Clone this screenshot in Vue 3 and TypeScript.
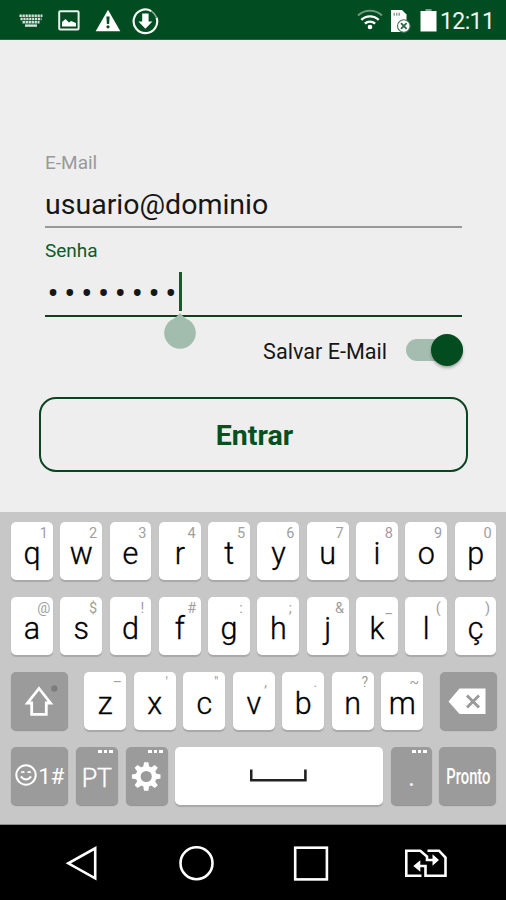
<script setup lang="ts">
import { ref } from 'vue'

interface Key {
  label: string
  hint: string
}

const toKeys = (letters: string, hints: string[]): Key[] =>
  letters.split('').map((label, i) => ({ label, hint: hints[i] }))

const topRow = toKeys('qwertyuiop', ['1', '2', '3', '4', '5', '6', '7', '8', '9', '0'])
const homeRow = toKeys('asdfghjklç', ['@', '$', '!', '#', ':', ';', '&', '_', '(', ')'])
const bottomRow = toKeys('zxcvbnm', ['–', "'", '"', ',', '.', '?', '~'])

const email = ref('usuario@dominio')
const password = ref('••••••••')
const saveEmail = ref(true)
</script>

<template>
  <div class="screen">
    <header class="status">
      <div class="status-left">
        <svg class="ic-keyboard" width="24" height="14" viewBox="0 0 24 14">
          <g fill="none" stroke="#d5e2da" stroke-width="2.4">
            <path d="M0.5 1.8H23.5" stroke-dasharray="2.3 .7" />
            <path d="M1.5 5H22.5" stroke-dasharray="2.2 .7" />
            <path d="M3.5 8.2H20.5" stroke-dasharray="2.4 .6" />
            <path d="M6 11.6H18" />
          </g>
        </svg>
        <svg class="ic-image" width="22" height="21" viewBox="0 0 22 21">
          <rect x="1.2" y="1.2" width="19.4" height="18.4" rx="1" fill="none" stroke="#e9f1ec" stroke-width="2" />
          <path d="M4 16.5v-4.5l3.5-3 3.5 3.5 2-1.5 5 2v3.5z" fill="#fff" />
        </svg>
        <svg class="ic-warn" width="26" height="23" viewBox="0 0 26 23">
          <path d="M13 .8L25.3 22.3H.7z" fill="#fff" />
          <path d="M11.4 7.5h3.2l-.5 7.6h-2.2z" fill="#024c22" />
          <circle cx="13" cy="17.8" r="1.6" fill="#024c22" />
        </svg>
        <svg class="ic-download" width="27" height="27" viewBox="0 0 27 27">
          <path d="M19.3 3.1A11.8 11.8 0 1 0 24.6 9.6" fill="none" stroke="#f4f8f5" stroke-width="2.2" />
          <path d="M19.3 3.1A11.8 11.8 0 0 1 24.6 9.6" fill="none" stroke="#8fb09d" stroke-width="1.6" />
          <path d="M10.2 5.5h6.4v8h3.8l-7 7.2-7-7.2h3.8z" fill="#fff" />
        </svg>
      </div>
      <div class="status-right">
        <svg class="ic-wifi" width="26" height="21" viewBox="0 0 26 21">
          <g fill="none" stroke-width="2.3">
            <path d="M1 6.6A17.5 17.5 0 0 1 25 6.6" stroke="#6f987f" stroke-width="2" />
            <path d="M4.3 10.8A12.6 12.6 0 0 1 21.7 10.8" stroke="#fff" />
            <path d="M7.9 14.7A7.4 7.4 0 0 1 18.1 14.7" stroke="#fff" />
          </g>
          <circle cx="13" cy="18" r="2.3" fill="#fff" />
        </svg>
        <svg class="ic-sim" width="20" height="23" viewBox="0 0 20 23">
          <path d="M0 0H11L15.5 4.5V22H0z" fill="#fff" />
          <path d="M2.5 2.7h1.5v3H2.5zM5 2.7h1.5v3H5zM7.5 2.7H9v3H7.5z" fill="#8ea898" />
          <circle cx="12.8" cy="16" r="6.3" fill="#fff" stroke="#3d7153" stroke-width="1.1" />
          <path d="M10 13.2l5.6 5.6M15.6 13.2l-5.6 5.6" stroke="#2d6545" stroke-width="1.8" />
        </svg>
        <svg class="ic-battery" width="17" height="23" viewBox="0 0 17 23">
          <path d="M5.5 0h6v3h-6z" fill="#7ea08c" />
          <path d="M.5 2h16v20.5H.5z" fill="#fff" />
        </svg>
        <span class="clock">12:11</span>
      </div>
    </header>

    <main class="form">
      <label class="caption">E-Mail</label>
      <div class="input">{{ email }}</div>
      <label class="caption active">Senha</label>
      <div class="input active">
        <span class="dots">{{ password }}</span>
        <span class="caret">
          <svg class="handle" width="34" height="38" viewBox="0 0 34 38">
            <path d="M17 0Q20 4 27 7.8A15.8 15.8 0 1 1 7 7.8Q14 4 17 0Z" fill="#a2bcae" />
          </svg>
        </span>
      </div>
      <div class="save" @click="saveEmail = !saveEmail">
        <span class="save-text">Salvar E-Mail</span>
        <span class="switch" :class="{ on: saveEmail }"><i class="thumb"></i></span>
      </div>
      <button class="enter" type="button"><span>Entrar</span></button>
    </main>

    <section class="keyboard">
      <div class="row">
        <div v-for="k in topRow" :key="k.label" class="key">
          <span class="hint">{{ k.hint }}</span><span class="letter">{{ k.label }}</span>
        </div>
      </div>
      <div class="row">
        <div v-for="k in homeRow" :key="k.label" class="key">
          <span class="hint">{{ k.hint }}</span><span class="letter">{{ k.label }}</span>
        </div>
      </div>
      <div class="row third">
        <div class="key dark wide">
          <svg width="57" height="58" viewBox="0 0 57 58">
            <path d="M28 16.5L39.5 31H35.3V42.3H20.7V31H16.5Z" fill="none" stroke="#fff" stroke-width="2.8" />
            <circle cx="43.3" cy="16.5" r="3.2" fill="#7d7d7d" />
          </svg>
        </div>
        <div class="letters">
          <div v-for="k in bottomRow" :key="k.label" class="key">
            <span class="hint small">{{ k.hint }}</span><span class="letter">{{ k.label }}</span>
          </div>
        </div>
        <div class="key dark wide">
          <svg width="57" height="58" viewBox="0 0 57 58">
            <path d="M8.5 29.5L19.5 16.5H45.5V42H19.5Z" fill="#fff" />
            <path d="M27 23.5L39 35.5M39 23.5L27 35.5" stroke="#9b9b9b" stroke-width="3" />
          </svg>
        </div>
      </div>
      <div class="row fourth">
        <div class="key dark wide sym">
          <svg width="22" height="22" viewBox="0 0 22 22">
            <g fill="none" stroke="#fff" stroke-width="2">
              <circle cx="11" cy="11" r="9.7" />
              <path d="M5.8 12.5Q11 18.5 16.2 12.5" />
              <path d="M6.3 8.8Q7.8 6.8 9.3 8.8M12.7 8.8Q14.2 6.8 15.7 8.8" stroke-width="1.6" />
            </g>
          </svg>
          <span>1#</span>
        </div>
        <div class="key dark lang">
          <span class="more"><i></i><i></i><i></i></span><span class="pt">PT</span>
        </div>
        <div class="key dark">
          <span class="more"><i></i><i></i><i></i></span>
          <svg class="gear" width="42" height="58" viewBox="0 0 42 58">
            <g transform="translate(20.2 29.5)">
              <circle r="8" fill="none" stroke="#fff" stroke-width="4.8" />
              <path
                v-for="a in 8"
                :key="a"
                :transform="`rotate(${a * 45})`"
                d="M-3.1 -9L-2.1 -14.3H2.1L3.1 -9Z"
                fill="#fff"
              />
            </g>
          </svg>
        </div>
        <div class="key space">
          <svg width="58" height="14" viewBox="0 0 58 14">
            <path d="M1.2 .5V11.2H55.4V.5" fill="none" stroke="#222" stroke-width="2.6" />
          </svg>
        </div>
        <div class="key dark">
          <span class="more"><i></i><i></i><i></i></span><span class="period">.</span>
        </div>
        <div class="key dark wide done"><span>Pronto</span></div>
      </div>
    </section>

    <nav class="nav">
      <svg width="506" height="75" viewBox="0 0 506 75">
        <g fill="none" stroke="#fff" stroke-width="2.6">
          <path d="M95.2 23.3V53.3L68.3 38.3Z" />
          <circle cx="196.5" cy="38.2" r="16" />
          <rect x="295.2" y="22.7" width="31.7" height="31.7" />
          <path d="M421.5 50.8H406.3V25.7H420.3L427 31.5V35H434" />
          <path d="M427.5 25.7H439L445.5 32.5V50.8H425.5V41H418" />
        </g>
        <path d="M432.5 29.2L439 35L432.5 40.8Z M420.3 35.2L413.3 41L420.3 46.8Z" fill="#fff" />
      </svg>
    </nav>
  </div>
</template>

<style>
body {
  margin: 0;
  background: #eee;
}
</style>

<style scoped>
.screen {
  width: 506px;
  height: 900px;
  display: flex;
  flex-direction: column;
  background: #eee;
  font-family: Roboto, 'Liberation Sans', sans-serif;
  overflow: hidden;
}
svg {
  display: block;
  flex: none;
}
.status {
  height: 40px;
  box-sizing: border-box;
  padding: 2px 12px 0 19px;
  display: flex;
  justify-content: space-between;
  background: #024c22;
  border-bottom: 1px solid #2c6243;
}
.status-left,
.status-right {
  display: flex;
  align-items: center;
}
.ic-keyboard { margin-right: 15px; }
.ic-image { margin-right: 15px; }
.ic-warn { margin-right: 11px; }
.ic-download { margin-top: 1px; }
.ic-wifi { margin-right: 8px; margin-top: -2px; }
.ic-sim { margin-right: 9px; margin-top: 1px; }
.ic-battery { margin-right: 3px; }
.clock {
  width: 54px;
  font-size: 23px;
  letter-spacing: -0.6px;
  line-height: 37px;
  padding-top: 1px;
  color: #eef4f0;
  white-space: nowrap;
}
.form {
  height: 472px;
  box-sizing: border-box;
  padding: 110px 38px 0;
  display: flex;
  flex-direction: column;
}
.caption {
  margin-left: 7px;
  height: 26px;
  font-size: 19px;
  line-height: 26px;
  color: #999;
}
.caption.active {
  margin-top: 10px;
  color: #0d5a2d;
}
.input {
  height: 50px;
  box-sizing: content-box;
  margin: 0 6px 0 7px;
  border-bottom: 2px solid #999;
  font-size: 28.5px;
  line-height: 58px;
  color: #161616;
  display: flex;
}
.input.active {
  height: 51px;
  border-bottom-color: #14401f;
}
.dots {
  width: 131.5px;
  padding-left: 2.5px;
  font-size: 33px;
  letter-spacing: 5.7px;
  line-height: 60px;
  white-space: nowrap;
}
.caret {
  position: relative;
  width: 2.5px;
  height: 39px;
  margin-top: 8px;
  background: #0f5c2c;
}
.handle {
  position: absolute;
  left: -16px;
  top: 41px;
}
.save {
  height: 32px;
  margin: 17px 5px 0 0;
  display: flex;
  justify-content: flex-end;
  align-items: center;
}
.save-text {
  font-size: 21.6px;
  line-height: 32px;
  margin-right: 19px;
  padding-top: 3px;
  color: #161616;
}
.switch {
  width: 57px;
  height: 22px;
  border-radius: 11px;
  background: #b9b9b9;
  display: flex;
  align-items: center;
}
.switch.on {
  background: #a4bdb0;
  justify-content: flex-end;
}
.thumb {
  width: 32px;
  height: 32px;
  flex: none;
  border-radius: 50%;
  background: #024c1f;
  box-shadow: 0 2px 3px rgba(0, 0, 0, 0.3);
}
.enter {
  height: 75px;
  margin: 31px 0 0 1px;
  padding: 1px 0 0 2px;
  border: 2.5px solid #0a4420;
  border-radius: 17px;
  background: transparent;
  font: 700 28.5px Roboto, sans-serif;
  color: #04501f;
}
.keyboard {
  height: 313px;
  box-sizing: border-box;
  padding: 10px 9.5px 0 11px;
  display: flex;
  flex-direction: column;
  gap: 16.5px;
  background: #c7c7c7;
  border-bottom: 1px solid #8c8c8c;
}
.row {
  height: 58.4px;
  display: grid;
  grid-template-columns: repeat(10, 1fr);
  grid-template-rows: 58.4px;
  gap: 7.5px;
}
.row.third {
  grid-template-columns: 57px 339px 57px;
  justify-content: space-between;
  gap: 0;
}
.letters {
  display: grid;
  grid-template-columns: repeat(7, 1fr);
  grid-template-rows: 58.4px;
  gap: 7.5px;
}
.row.fourth {
  grid-template-columns: 57px 42px 42px 208px 40.5px 57px;
  gap: 0;
  justify-content: space-between;
}
.key {
  min-width: 0;
  box-sizing: border-box;
  height: 58px;
  display: grid;
  grid-template: 100% / 100%;
  background: #fff;
  border-radius: 5px;
  box-shadow: 0 1.5px 1px #a8a8a8;
}
.key.dark {
  background: #9b9b9b;
  color: #fff;
  box-shadow: 0 1px 1px #909090;
}
.key > * {
  grid-area: 1 / 1;
}
.letter {
  align-self: start;
  margin-top: 20px;
  font-size: 30.5px;
  font-weight: 300;
  -webkit-text-stroke: 0.35px #000;
  line-height: 24px;
  text-align: center;
  color: #000;
}
.hint {
  justify-self: end;
  align-self: start;
  width: 14px;
  margin: 3px 2px 0 0;
  text-align: center;
  font-size: 14.5px;
  line-height: 17px;
  color: #a0a0a0;
}
.hint.small {
  margin-top: 2px;
  font-size: 14px;
}
.key.sym {
  display: flex;
  align-items: center;
  justify-content: center;
  gap: 1px;
  font-size: 22.5px;
  letter-spacing: -0.4px;
}
.sym svg {
  margin-bottom: 1px;
}
.pt {
  text-align: center;
  font-size: 25px;
  font-weight: 300;
  -webkit-text-stroke: 0.4px #fff;
  line-height: 63px;
}
.more {
  justify-self: end;
  align-self: start;
  display: flex;
  gap: 2px;
  padding: 3px 5px 0 0;
}
.more i {
  width: 3.5px;
  height: 3.5px;
  background: #fff;
}
.key.space svg {
  place-self: center;
}
.period {
  text-align: center;
  font-size: 25px;
  line-height: 62px;
}
.done {
  place-items: center;
  font-size: 22px;
  font-weight: 500;
}
.done span {
  transform: translate(0.5px, 1px) scaleX(0.67);
}
.nav {
  height: 75px;
  background: #000;
}
</style>
